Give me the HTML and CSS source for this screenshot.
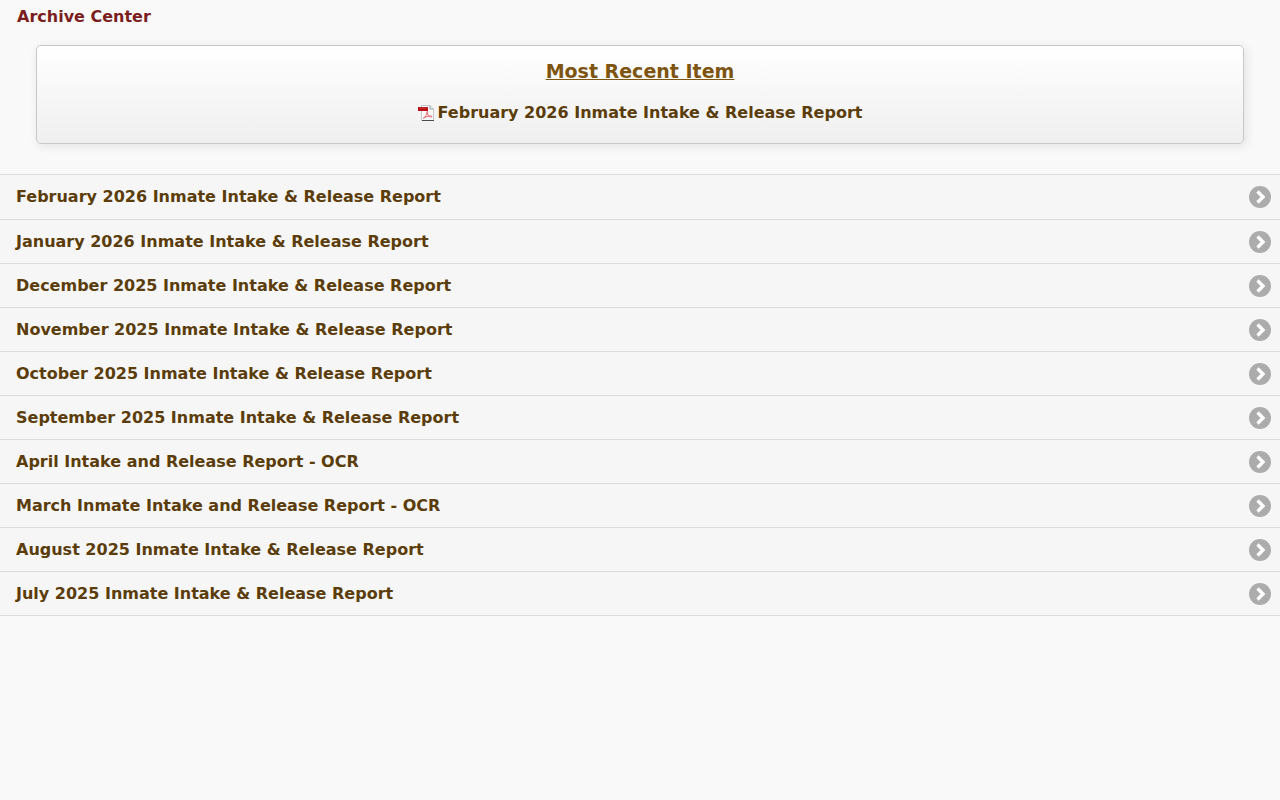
FILE: index.html
```html
<!DOCTYPE html>
<html lang="en">
<head>
<meta charset="utf-8">
<meta name="viewport" content="width=device-width, initial-scale=1">
<title>Archive Center</title>
<link rel="stylesheet" href="styles.css">
</head>
<body>
<svg class="sprite" aria-hidden="true">
  <symbol id="chevron" viewBox="0 0 22 22">
    <circle cx="11" cy="11" r="11" fill="#acacac"/>
    <path d="M8.500 5.500 14 11l-5.500 5.500" fill="none" stroke="#fff" stroke-width="3.400"/>
  </symbol>
</svg>
<header><h1 class="page-title">Archive Center</h1></header>
<main>
  <section class="recent">
    <h2 class="recent-title">Most Recent Item</h2>
    <a class="recent-link" href="#">
      <svg class="pdf-icon" viewBox="0 0 16 16" aria-hidden="true">
        <path d="M3.500.5h8.500l3.500 3.500v11.500h-12z" fill="#fafafa" stroke="#c3c9cc"/>
        <path d="M12 .5V4h3.500" fill="#e5e9eb" stroke="#9ba3a7"/>
        <path d="M4 15.500h12" fill="none" stroke="#4c4c4c"/>
        <path d="M0 2h10v4H0z" fill="#b90f17"/>
        <path d="M1 3h8" stroke="#c9343b"/>
        <path d="M5 13.500c2-1 4-4 4-6.500 0-1.500 1-1 .6.600C9 10 11 12 13.500 12c1 0 .5-1-1-1-2.500 0-5 .800-7 2.200" fill="none" stroke="#ea4a52" stroke-width=".8"/>
      </svg>
      <span>February 2026 Inmate Intake &amp; Release Report</span>
    </a>
  </section>
  <ul class="archive-list">
    <li><a class="archive-link" href="#"><span>February 2026 Inmate Intake &amp; Release Report</span><svg class="chevron" aria-hidden="true"><use href="#chevron"/></svg></a></li>
    <li><a class="archive-link" href="#"><span>January 2026 Inmate Intake &amp; Release Report</span><svg class="chevron" aria-hidden="true"><use href="#chevron"/></svg></a></li>
    <li><a class="archive-link" href="#"><span>December 2025 Inmate Intake &amp; Release Report</span><svg class="chevron" aria-hidden="true"><use href="#chevron"/></svg></a></li>
    <li><a class="archive-link" href="#"><span>November 2025 Inmate Intake &amp; Release Report</span><svg class="chevron" aria-hidden="true"><use href="#chevron"/></svg></a></li>
    <li><a class="archive-link" href="#"><span>October 2025 Inmate Intake &amp; Release Report</span><svg class="chevron" aria-hidden="true"><use href="#chevron"/></svg></a></li>
    <li><a class="archive-link" href="#"><span>September 2025 Inmate Intake &amp; Release Report</span><svg class="chevron" aria-hidden="true"><use href="#chevron"/></svg></a></li>
    <li><a class="archive-link" href="#"><span>April Intake and Release Report - OCR</span><svg class="chevron" aria-hidden="true"><use href="#chevron"/></svg></a></li>
    <li><a class="archive-link" href="#"><span>March Inmate Intake and Release Report - OCR</span><svg class="chevron" aria-hidden="true"><use href="#chevron"/></svg></a></li>
    <li><a class="archive-link" href="#"><span>August 2025 Inmate Intake &amp; Release Report</span><svg class="chevron" aria-hidden="true"><use href="#chevron"/></svg></a></li>
    <li><a class="archive-link" href="#"><span>July 2025 Inmate Intake &amp; Release Report</span><svg class="chevron" aria-hidden="true"><use href="#chevron"/></svg></a></li>
  </ul>
</main>
</body>
</html>
```

FILE: styles.css
```css
* {
  box-sizing: border-box;
}

body {
  margin: 0;
  background: #f9f9f9;
  color: #5b3d0b;
  font: bold 16px/20px "DejaVu Sans", sans-serif;
}

.sprite {
  display: none;
}

.page-title {
  margin: 0;
  padding: 7px 17px 18px;
  color: #7b1e1e;
  font-size: 16px;
  line-height: 20px;
}

.recent {
  display: flex;
  flex-direction: column;
  align-items: center;
  gap: 20px;
  margin: 0 36px 30px;
  padding: 13px 16px 20px;
  border: 1px solid #c8c8c8;
  border-radius: 5px;
  background: linear-gradient(#fff, #efefef);
  box-shadow: 2px 2px 10px #e2e2e2;
}

.recent-title {
  margin: 0;
  color: #7d5511;
  font-size: 19px;
  line-height: 24px;
  text-decoration: underline;
}

.recent-link {
  display: flex;
  align-items: center;
  gap: 4px;
  color: inherit;
  text-decoration: none;
}

.pdf-icon {
  flex: none;
  width: 16px;
  height: 16px;
}

.archive-list {
  margin: 0;
  padding: 0;
  list-style: none;
  border-bottom: 1px solid #ddd;
}

.archive-link {
  display: flex;
  align-items: center;
  justify-content: space-between;
  gap: 16px;
  padding: 11px 9px 10px 16px;
  border-top: 1px solid #ddd;
  background: #f6f6f6;
  color: inherit;
  text-decoration: none;
}

.archive-list li:first-child .archive-link {
  padding-bottom: 11px;
}

.archive-link:hover {
  background: #ededed;
}

.chevron {
  flex: none;
  width: 22px;
  height: 22px;
}
```
